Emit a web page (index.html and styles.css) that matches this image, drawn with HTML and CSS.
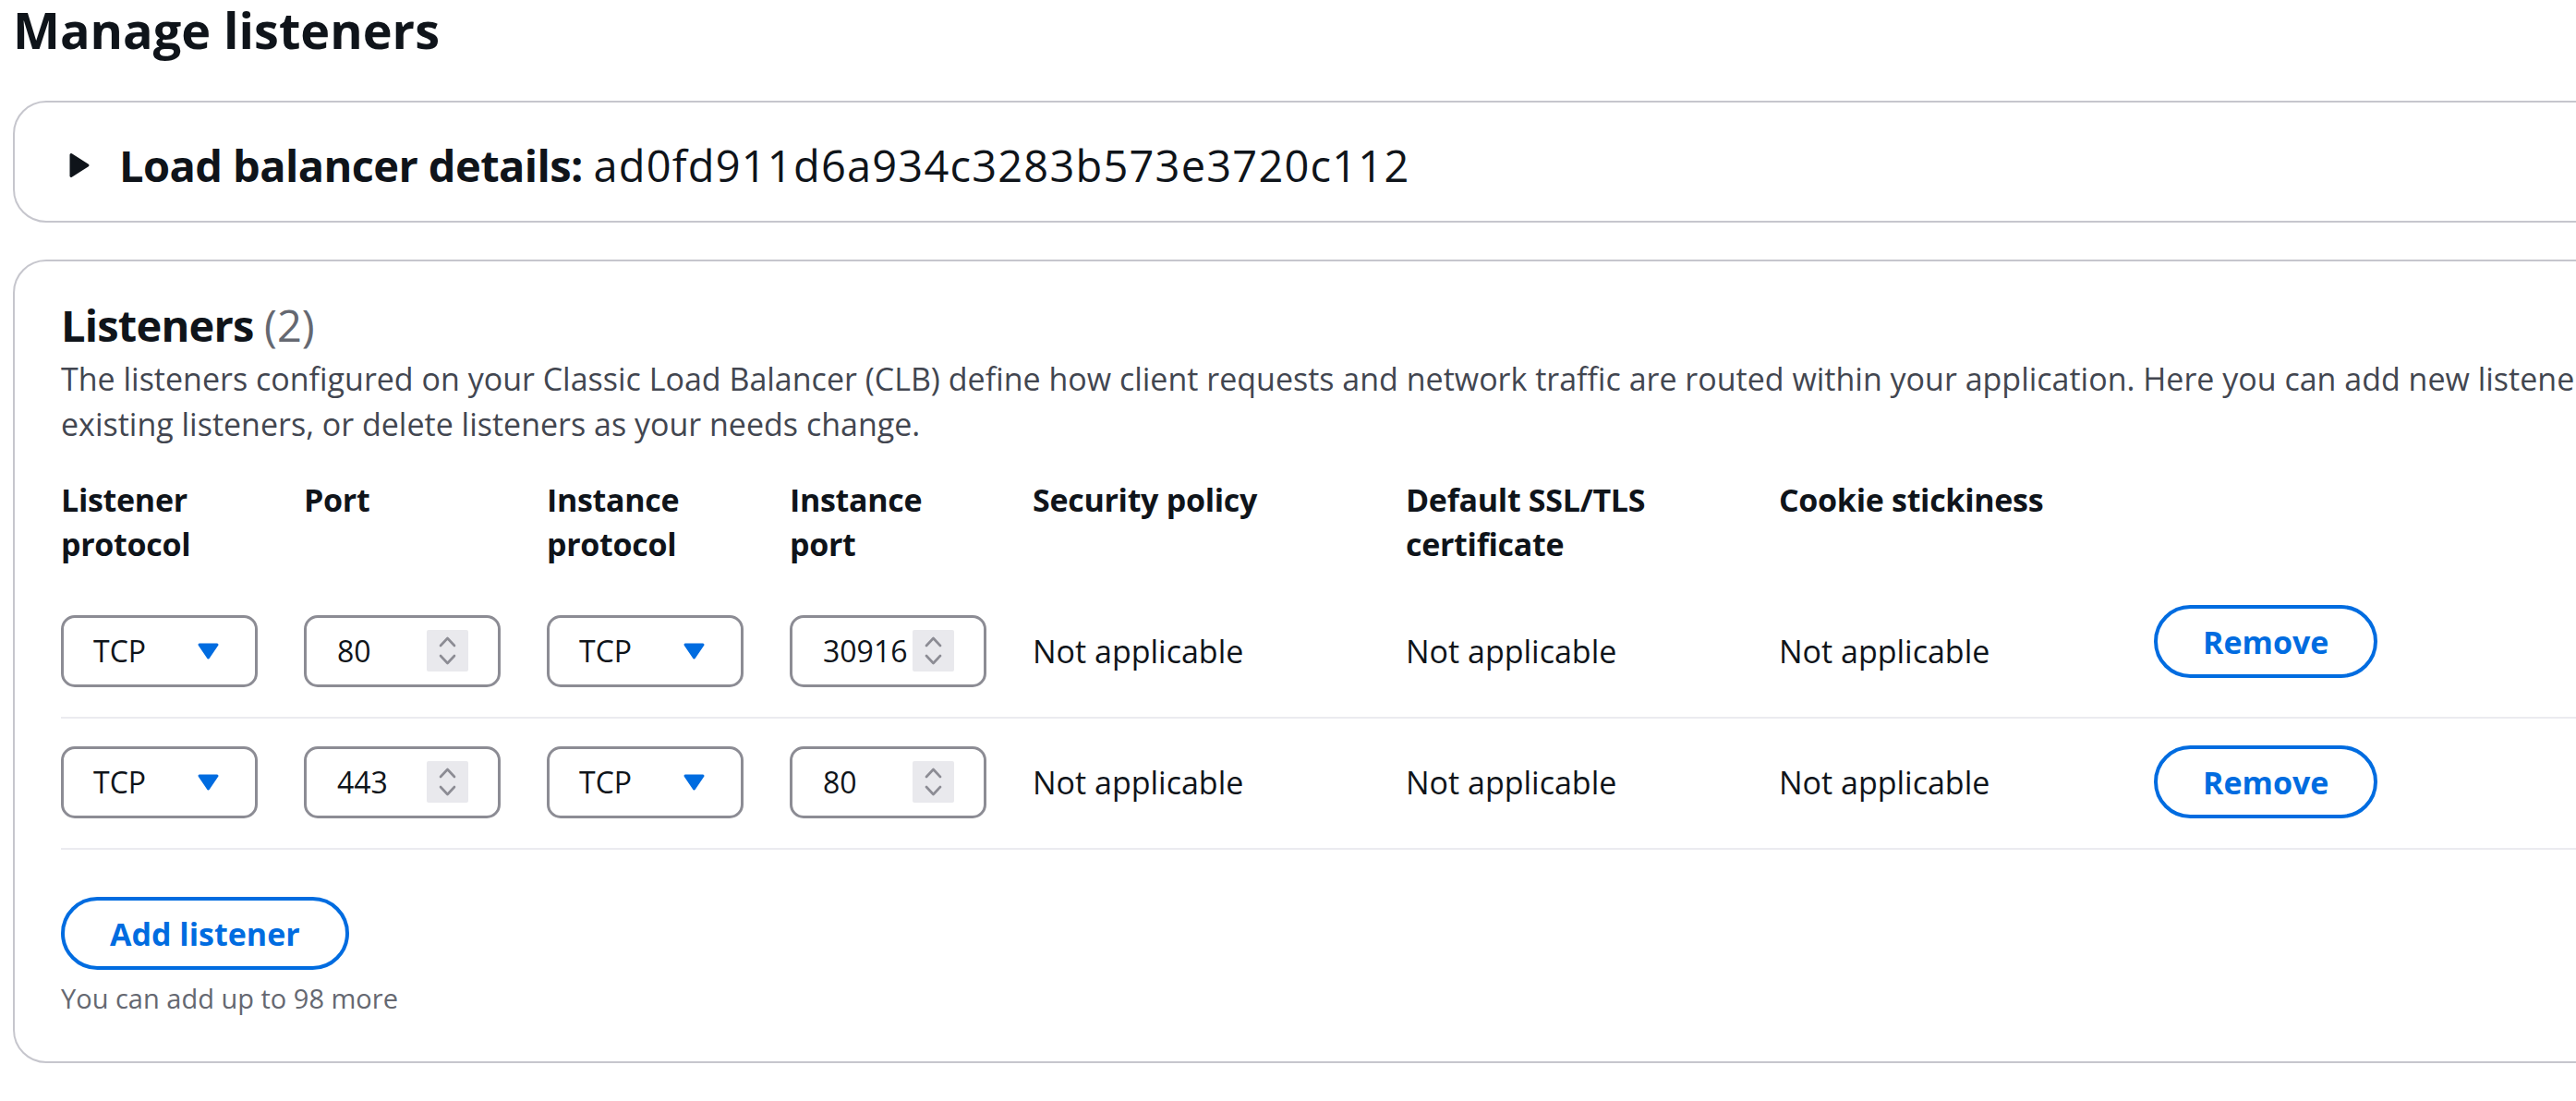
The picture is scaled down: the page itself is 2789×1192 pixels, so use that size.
FILE: index.html
```html
<!DOCTYPE html>
<html lang="en">
<head>
<meta charset="utf-8">
<title>Manage listeners</title>
<link rel="stylesheet" href="styles.css">
</head>
<body>
<div class="page">
  <h1 class="page-title">Manage listeners</h1>

  <section class="panel panel-details">
    <div class="details-header">
      <svg class="caret-right" width="24" height="30" viewBox="0 0 24 30" aria-hidden="true"><path d="M3 3.5 L21 15 L3 26.5 Z"/></svg>
      <h2 class="details-title">Load balancer details: <span class="lb-id">ad0fd911d6a934c3283b573e3720c112</span></h2>
    </div>
  </section>

  <section class="panel panel-listeners">
    <h2 class="section-title">Listeners <span class="counter">(2)</span></h2>
    <p class="section-desc">The listeners configured on your Classic Load Balancer (CLB) define how client requests and network traffic are routed within your application. Here you can add new listeners, edit<br>existing listeners, or delete listeners as your needs change.</p>

    <div class="grid header-row">
      <div class="col-label">Listener protocol</div>
      <div class="col-label">Port</div>
      <div class="col-label">Instance protocol</div>
      <div class="col-label">Instance port</div>
      <div class="col-label">Security policy</div>
      <div class="col-label">Default SSL/TLS certificate</div>
      <div class="col-label">Cookie stickiness</div>
      <div></div>
    </div>

    <div class="grid item-row first-row">
      <div class="select"><span class="value">TCP</span><svg class="caret-down" width="25" height="20" viewBox="0 0 25 20"><path d="M3 3 L22 3 L12.5 17 Z"/></svg></div>
      <div class="number"><span class="value">80</span><span class="spinner"><svg width="45" height="45" viewBox="0 0 45 45"><polyline points="15,17 22.5,9 30,17"/><polyline points="15,28 22.5,36 30,28"/></svg></span></div>
      <div class="select"><span class="value">TCP</span><svg class="caret-down" width="25" height="20" viewBox="0 0 25 20"><path d="M3 3 L22 3 L12.5 17 Z"/></svg></div>
      <div class="number"><span class="value">30916</span><span class="spinner"><svg width="45" height="45" viewBox="0 0 45 45"><polyline points="15,17 22.5,9 30,17"/><polyline points="15,28 22.5,36 30,28"/></svg></span></div>
      <div class="cell">Not applicable</div>
      <div class="cell">Not applicable</div>
      <div class="cell">Not applicable</div>
      <div class="cell-action"><button class="btn btn-raised">Remove</button></div>
    </div>

    <div class="grid item-row">
      <div class="select"><span class="value">TCP</span><svg class="caret-down" width="25" height="20" viewBox="0 0 25 20"><path d="M3 3 L22 3 L12.5 17 Z"/></svg></div>
      <div class="number"><span class="value">443</span><span class="spinner"><svg width="45" height="45" viewBox="0 0 45 45"><polyline points="15,17 22.5,9 30,17"/><polyline points="15,28 22.5,36 30,28"/></svg></span></div>
      <div class="select"><span class="value">TCP</span><svg class="caret-down" width="25" height="20" viewBox="0 0 25 20"><path d="M3 3 L22 3 L12.5 17 Z"/></svg></div>
      <div class="number"><span class="value">80</span><span class="spinner"><svg width="45" height="45" viewBox="0 0 45 45"><polyline points="15,17 22.5,9 30,17"/><polyline points="15,28 22.5,36 30,28"/></svg></span></div>
      <div class="cell">Not applicable</div>
      <div class="cell">Not applicable</div>
      <div class="cell">Not applicable</div>
      <div class="cell-action"><button class="btn">Remove</button></div>
    </div>

    <div class="add-area">
      <button class="btn">Add listener</button>
      <div class="hint">You can add up to 98 more</div>
    </div>
  </section>
</div>
</body>
</html>
```

FILE: styles.css
```css
html, body {
  margin: 0;
  padding: 0;
  background: #ffffff;
}

body {
  overflow: hidden;
  font-family: "Open Sans", "Noto Sans", sans-serif;
  color: #0f141a;
}

.page {
  width: 2960px;
  padding-left: 14px;
}

.page-title {
  margin: 0;
  font-size: 54px;
  line-height: 64px;
  font-weight: 700;
  letter-spacing: 0;
}

.panel {
  border: 2px solid #c6c6cd;
  border-radius: 36px;
  background: #ffffff;
}

.panel-details {
  margin-top: 45px;
  padding: 40px 0 32px 58px;
}

.details-header {
  display: flex;
  align-items: center;
  gap: 31px;
}

.caret-right {
  display: block;
  fill: #0f141a;
  stroke: #0f141a;
  stroke-width: 3;
  stroke-linejoin: round;
}

.details-title {
  margin: 0;
  font-size: 47px;
  line-height: 56px;
  font-weight: 700;
  letter-spacing: -0.6px;
}

.lb-id {
  font-weight: 400;
  letter-spacing: 1.2px;
}

.panel-listeners {
  margin-top: 40px;
  padding: 41px 0 49px 50px;
}

.section-title {
  margin: 0;
  font-size: 47px;
  line-height: 56px;
  font-weight: 700;
  letter-spacing: -0.8px;
}

.counter {
  font-weight: 400;
  color: #656871;
  letter-spacing: 0;
}

.section-desc {
  margin: 6px 0 0;
  font-size: 34px;
  line-height: 49px;
  color: #424650;
  white-space: nowrap;
}

.grid {
  display: grid;
  grid-template-columns: 213px 213px 213px 213px 354px 354px 356px 1fr;
  column-gap: 50px;
}

.header-row {
  margin-top: 33px;
}

.col-label {
  font-size: 34px;
  line-height: 48px;
  font-weight: 700;
  letter-spacing: -0.3px;
}

.item-row {
  align-items: center;
  padding: 29px 0 32px;
  border-bottom: 2px solid #ebebf0;
}

.first-row {
  margin-top: 23px;
}

.select,
.number {
  display: flex;
  align-items: center;
  height: 78px;
  box-sizing: border-box;
  border: 3px solid #8c8c94;
  border-radius: 15px;
  background: #ffffff;
  font-size: 32px;
  color: #0f141a;
}

.select {
  justify-content: space-between;
  padding: 0 38px 0 32px;
}

.caret-down {
  display: block;
  fill: #006ce0;
  stroke: #006ce0;
  stroke-width: 3;
  stroke-linejoin: round;
}

.number {
  padding: 0 32px 0 33px;
}

.number .value {
  flex: 1;
  overflow: hidden;
  white-space: nowrap;
}

.spinner {
  display: block;
  width: 45px;
  height: 45px;
  background: #e9e9ed;
  border-radius: 2px;
  flex: none;
}

.spinner svg {
  display: block;
  fill: none;
  stroke: #8c8c94;
  stroke-width: 2.6;
  stroke-linecap: round;
  stroke-linejoin: round;
}

.cell {
  font-size: 34px;
  line-height: 48px;
}

.cell-action {
  align-self: center;
}

.btn {
  display: inline-flex;
  align-items: center;
  justify-content: center;
  height: 79px;
  box-sizing: border-box;
  padding: 0 49px;
  border: 4px solid #006ce0;
  border-radius: 40px;
  background: #ffffff;
  color: #006ce0;
  font-family: "Open Sans", "Noto Sans", sans-serif;
  font-size: 34px;
  font-weight: 700;
  letter-spacing: 0;
  cursor: pointer;
}

.btn-raised {
  position: relative;
  top: -10px;
}

.add-area {
  margin-top: 51px;
}

.hint {
  margin-top: 12px;
  font-size: 29px;
  line-height: 38px;
  color: #656871;
}
```
